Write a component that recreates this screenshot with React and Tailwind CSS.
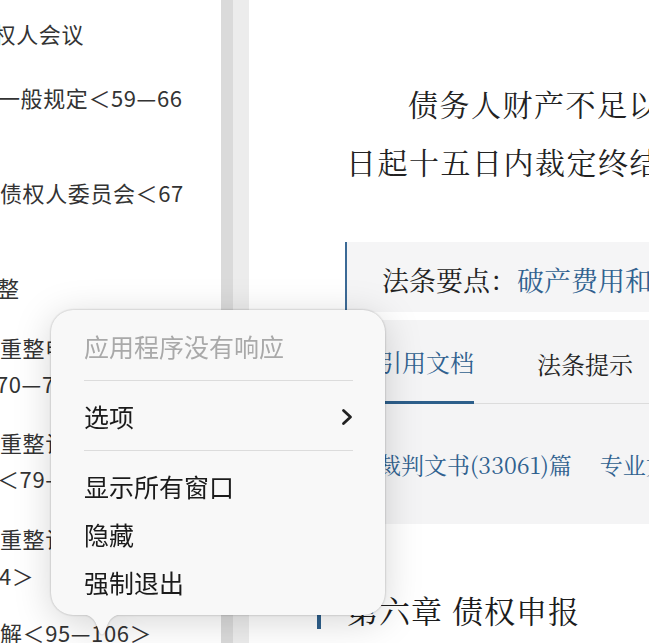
import React from "react";

function SideLine({ className = "", children }) {
  return (
    <div className={"whitespace-nowrap h-[36px] leading-[36px] " + className}>{children}</div>
  );
}

function Chevron() {
  return (
    <svg width="14" height="18" viewBox="0 0 14 18" fill="none">
      <path d="M3.5 2.5 L10.5 9 L3.5 15.5" stroke="#222" strokeWidth="2.8" strokeLinecap="round" strokeLinejoin="round" />
    </svg>
  );
}

export default function App() {
  return (
    <div className="relative w-[649px] h-[643px] overflow-hidden bg-white flex">
      {/* sidebar */}
      <aside className="w-[221px] shrink-0 overflow-hidden font-['Noto_Sans_CJK_SC','Noto_Sans',sans-serif] text-[22px] tracking-[0.6px] text-[#333]">
        <SideLine className="mt-[15px] -ml-[29px]">债权人会议</SideLine>
        <SideLine className="mt-[28px] -ml-[2px]">一般规定＜59—66</SideLine>
        <SideLine className="mt-[59px]">债权人委员会＜67</SideLine>
        <SideLine className="mt-[59px] -ml-[3px]">整</SideLine>
        <SideLine className="mt-[24px]">重整申请和重整期间</SideLine>
        <SideLine className="-ml-[4px]">70—78＞</SideLine>
        <SideLine className="mt-[23px]">重整计划的制定和批准</SideLine>
        <SideLine className="-ml-[3px]">＜79—86＞</SideLine>
        <SideLine className="mt-[24px]">重整计划的执行＜87—9</SideLine>
        <SideLine className="mt-[1px] -ml-[1px]">4＞</SideLine>
        <SideLine className="mt-[21px]">解＜95—106＞</SideLine>
      </aside>

      {/* scrollbar / divider */}
      <div className="w-[12px] shrink-0 bg-[#dadada]" />
      <div className="w-[16px] shrink-0 bg-[#ececec]" />

      {/* main */}
      <main className="flex-1 min-w-0 overflow-hidden pt-[74px] pl-[96px] font-['Noto_Serif_CJK_SC','Noto_Serif_SC','Liberation_Serif','Noto_Sans_CJK_SC',serif] text-[#222]">
        <div className="w-[760px]">
          <div className="ml-[1px] text-[30px] leading-[58px] tracking-[1.5px] whitespace-nowrap">
            <div className="pl-[62px]">债务人财产不足以清偿破产费用的，管理人应当提请人民法院终结破产程序。</div>
            <div>日起十五日内裁定终结破产程序，并予以公告。</div>
          </div>

          <div className="mt-[52px] h-[70px] border-l-2 border-[#3b6a96] bg-[#f5f5f6] flex items-center pt-[7px] pl-[35px] text-[27px] whitespace-nowrap">
            <span>法条要点：</span>
            <span className="text-[#30618f]">破产费用和共益债务</span>
          </div>

          <div className="mt-[8px] bg-[#f4f4f5]">
            <div className="flex h-[84px] border-b border-[#dcdcdc] text-[24px] whitespace-nowrap">
              <div className="ml-[33px] h-[84px] -mb-px pt-[3px] flex items-center border-b-[3px] border-[#2d5f8b] text-[#30618f]">引用文档</div>
              <div className="ml-[63px] h-[84px] pt-[3px] flex items-center">法条提示</div>
            </div>
            <div className="pt-[46px] pb-[44px] flex text-[23px] leading-[30px] text-[#30618f] whitespace-nowrap">
              <span className="ml-[33px]">裁判文书(33061)篇</span>
              <span className="ml-[28px]">专业文章(1209)篇</span>
            </div>
          </div>

          <div className="mt-[66px] -ml-[28px] flex items-center h-[40px] whitespace-nowrap">
            <div className="w-[4px] h-[38px] bg-[#2d5f8b]" />
            <div className="ml-[26px] text-[31px] leading-[40px] tracking-[1px] text-[#1c1c1c]">第六章 债权申报</div>
          </div>
        </div>
      </main>

      {/* context menu */}
      <div className="absolute left-[51px] top-[310px] w-[334px] [filter:drop-shadow(0_0_1px_rgba(0,0,0,0.28))_drop-shadow(0_6px_18px_rgba(0,0,0,0.16))]">
        <div className="h-[305px] rounded-[22px] bg-[#f8f8f8] font-['Noto_Sans_CJK_SC','Noto_Sans',sans-serif] text-[25px] text-[#1b1b1b]">
          <div className="pt-[12px] pl-[33px] h-[61px] leading-[48px] text-[#a9a9a9]">应用程序没有响应</div>
          <div className="mt-[9px] ml-[33px] mr-[32px] h-[1px] bg-[#dcdcdc]" />
          <div className="mt-[12px] pl-[33px] pr-[31px] h-[48px] flex items-center justify-between">
            <span>选项</span>
            <Chevron />
          </div>
          <div className="mt-[9px] ml-[33px] mr-[32px] h-[1px] bg-[#dcdcdc]" />
          <div className="mt-[11px] pl-[33px] h-[48px] leading-[48px]">显示所有窗口</div>
          <div className="pl-[33px] h-[48px] leading-[48px]">隐藏</div>
          <div className="pl-[33px] h-[48px] leading-[48px]">强制退出</div>
        </div>
        <svg className="absolute left-[28px] top-[304px]" width="46" height="25" viewBox="0 0 46 25">
          <path d="M0 0 C12 0 16 5 19.5 16 Q23 25 26.5 16 C30 5 34 0 46 0 Z" fill="#f8f8f8" />
        </svg>
      </div>
    </div>
  );
}
